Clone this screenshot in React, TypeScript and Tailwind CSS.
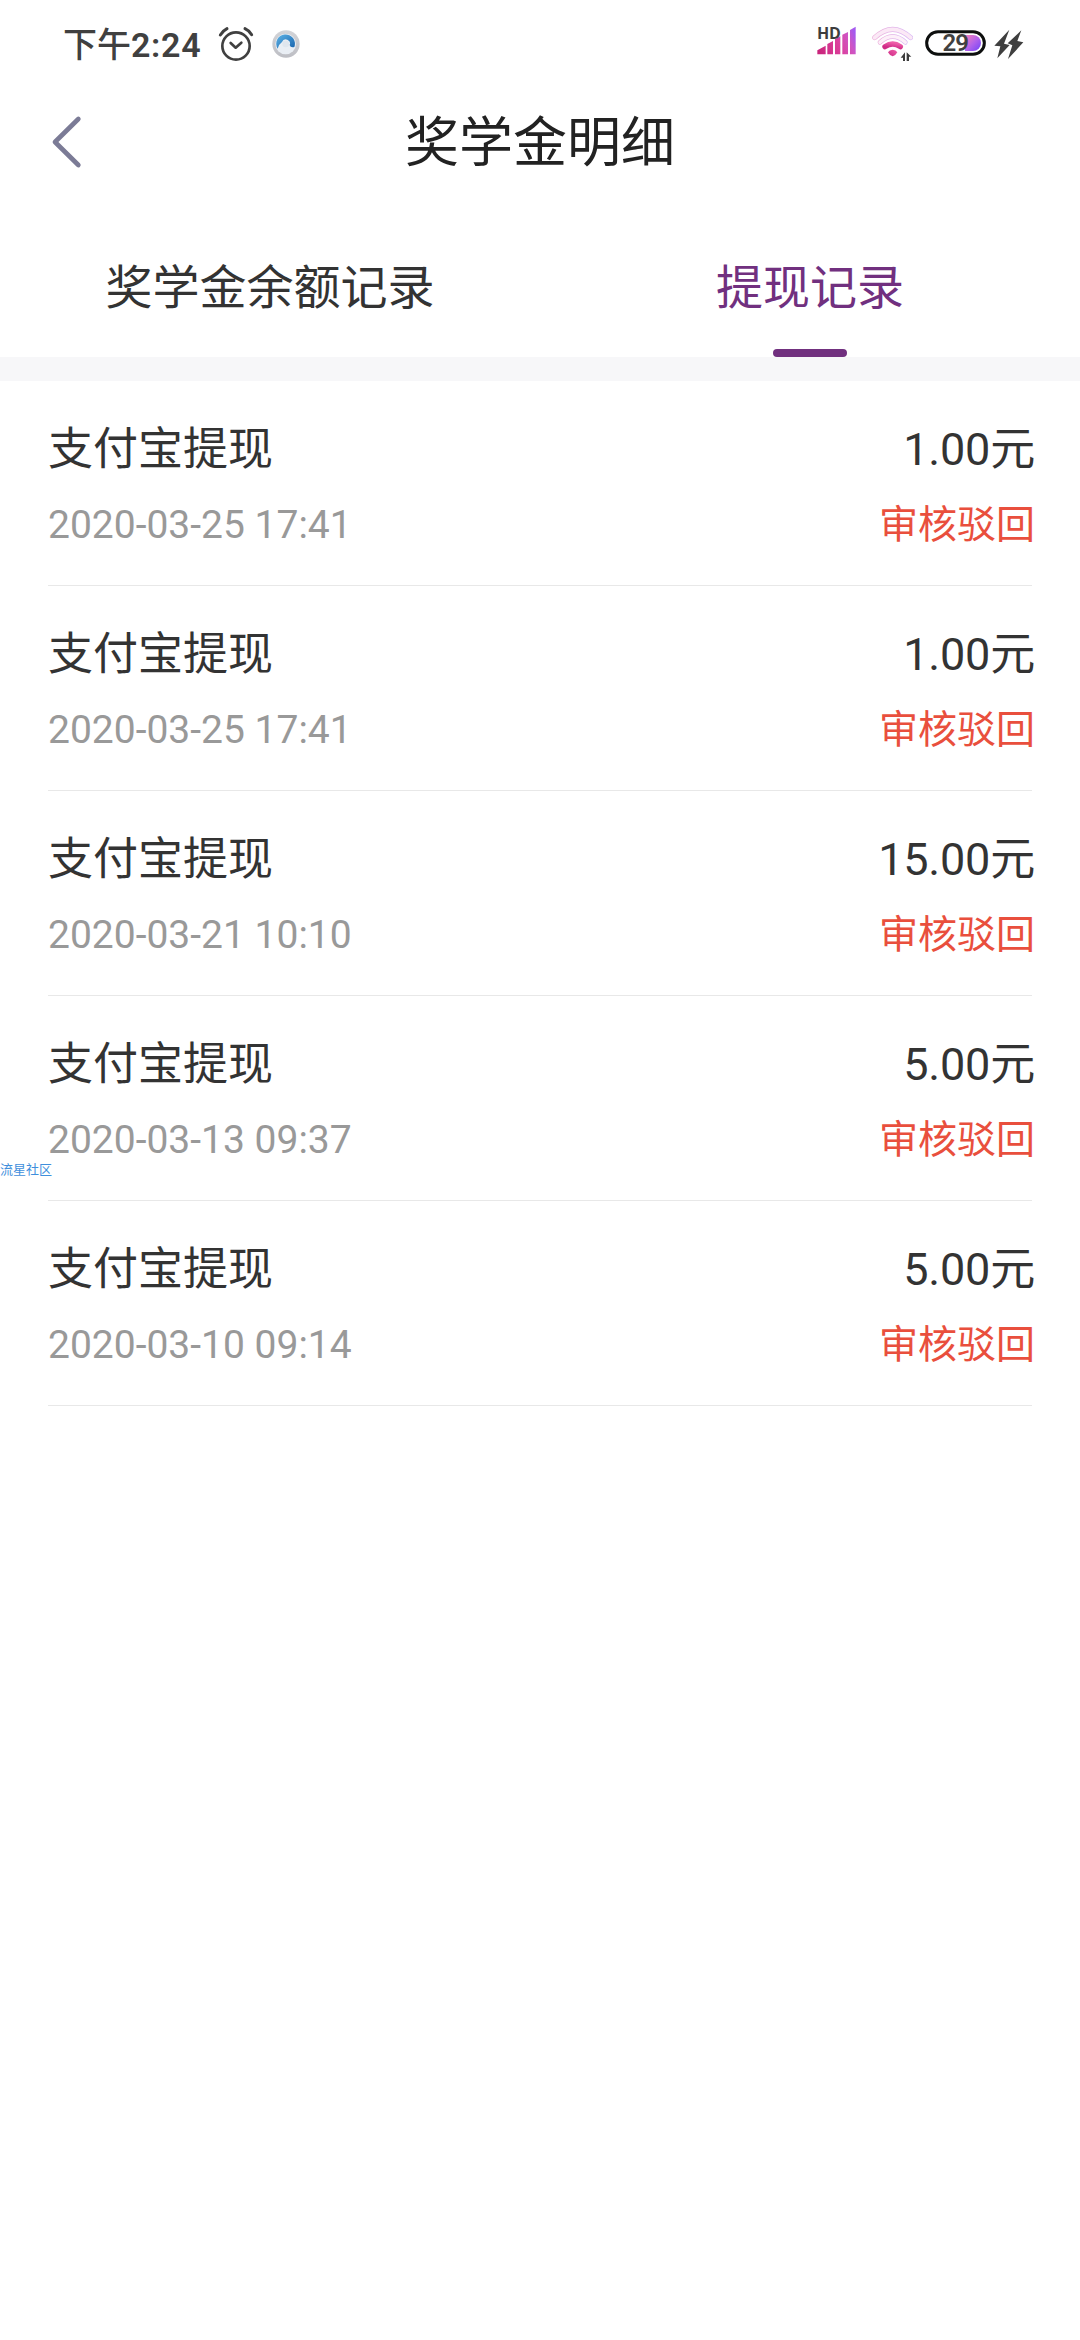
const font = 'font-[Roboto,"Noto_Sans_CJK_SC",sans-serif]';

const records = [
  { amount: "1.00元", time: "2020-03-25 17:41" },
  { amount: "1.00元", time: "2020-03-25 17:41" },
  { amount: "15.00元", time: "2020-03-21 10:10" },
  { amount: "5.00元", time: "2020-03-13 09:37" },
  { amount: "5.00元", time: "2020-03-10 09:14" },
];

function AlarmIcon() {
  return (
    <svg className="h-[36px] w-[36px]" viewBox="534 48 108 108" fill="none" stroke="#404040" strokeLinecap="round">
      <circle cx="588" cy="108" r="41" strokeWidth="8" />
      <path d="M572 99L587 113L604 98" strokeWidth="8" strokeLinejoin="round" />
      <path d="M541 75Q549 62 561 56M615 56Q628 62 635 74" strokeWidth="9" />
    </svg>
  );
}

function BrowserIcon() {
  return (
    <svg className="h-[28px] w-[28px]" viewBox="697 61 84 84">
      <defs>
        <linearGradient id="ring" x1="0" y1="0" x2="0" y2="1">
          <stop offset="0" stopColor="#d3d4d8" />
          <stop offset="1" stopColor="#bdbec4" />
        </linearGradient>
        <linearGradient id="swirl" x1="0" y1="0" x2="1" y2="1">
          <stop offset="0" stopColor="#5fb4e6" />
          <stop offset="1" stopColor="#1763ad" />
        </linearGradient>
      </defs>
      <circle cx="739" cy="103" r="41" fill="url(#ring)" />
      <circle cx="738" cy="103" r="31" fill="#e9eef4" />
      <path d="M714 117A28 28 0 1 1 764 112Q752 115 750 106A12 12 0 0 0 727 97Q718 103 714 117Z" fill="url(#swirl)" />
      <circle cx="738" cy="103" r="10" fill="#dfe6ee" />
    </svg>
  );
}

function SignalIcon() {
  return (
    <div className="relative h-[30px] w-[40px]">
      <svg className="h-[30px] w-[40px]" viewBox="50 46 120 90">
        <defs>
          <linearGradient id="sig" gradientUnits="userSpaceOnUse" x1="60" y1="134" x2="172" y2="90">
            <stop offset="0" stopColor="#c9257c" />
            <stop offset="0.5" stopColor="#dc3f9b" />
            <stop offset="0.8" stopColor="#cf55c4" />
            <stop offset="1" stopColor="#a35af0" />
          </linearGradient>
        </defs>
        <path
          fill="url(#sig)"
          d="M51 134V122L76 108V134ZM81 134V103L98 94V134ZM104 134V89L120 80V134ZM126 134V75L143 67V134ZM149 134V61L166 51V134Z"
        />
      </svg>
      <span className='absolute top-[1px] left-0 font-["Open_Sans",sans-serif] text-[16px] leading-[14px] font-bold tracking-[-0.3px] text-[#3d3d3d]'>
        HD
      </span>
    </div>
  );
}

function WifiIcon() {
  return (
    <svg className="h-[36px] w-[41px]" viewBox="216 48 123 108" fill="none">
      <defs>
        <linearGradient id="wf" x1="0" y1="1" x2="1" y2="0">
          <stop offset="0" stopColor="#cf2a86" />
          <stop offset="1" stopColor="#ee5fa9" />
        </linearGradient>
        <linearGradient id="wo" x1="0" y1="0" x2="1" y2="0">
          <stop offset="0" stopColor="#ecb3dc" />
          <stop offset="1" stopColor="#d9b9f5" />
        </linearGradient>
      </defs>
      <path d="M224 83Q278 33 332 83" stroke="url(#wo)" strokeWidth="15" strokeLinecap="round" />
      <path d="M224 83Q278 33 332 83" stroke="#fbe9f6" strokeWidth="11" strokeLinecap="round" />
      <path d="M240 97Q278 62 316 97" stroke="url(#wo)" strokeWidth="14" strokeLinecap="round" />
      <path d="M240 97Q278 62 316 97" stroke="#fdf0f9" strokeWidth="10" strokeLinecap="round" />
      <path d="M255 110Q278 94 301 110" stroke="url(#wf)" strokeWidth="16" strokeLinecap="round" />
      <path d="M264 127Q268 119 278 119Q288 119 292 127Q287 137 278 139Q269 137 264 127Z" fill="url(#wf)" />
      <path d="M315 127V153H309V143H302ZM320 153V127L334 140H327V153Z" fill="#3d3d3d" />
    </svg>
  );
}

function Battery() {
  return (
    <div className="relative h-[26px] w-[61px]">
      <svg className="h-[26px] w-[61px]" viewBox="375 58 183 78">
        <defs>
          <linearGradient id="bat" gradientUnits="userSpaceOnUse" x1="500" y1="78" x2="540" y2="116">
            <stop offset="0" stopColor="#ec7bc0" />
            <stop offset="0.5" stopColor="#b362ea" />
            <stop offset="1" stopColor="#7a48f5" />
          </linearGradient>
        </defs>
        <rect x="380" y="63" width="173" height="68" rx="34" fill="#fff" stroke="#0d0f0e" strokeWidth="9" />
        <path d="M495 73H519A24 24 0 0 1 519 121H495Z" fill="url(#bat)" />
      </svg>
      <span className="absolute top-0 left-[17.5px] font-[Roboto,sans-serif] text-[24px] leading-[27px] font-semibold tracking-[-0.9px] text-[#404040]">
        29
      </span>
    </div>
  );
}

function BoltIcon() {
  return (
    <svg className="h-[30px] w-[30px]" viewBox="581 56 90 90" fill="#3f3f3f">
      <path d="M627 58L582 106L600 108L591 144L628 104L611 100Z" />
      <path d="M663 60L622 99L636 105L623 146L669 96L651 92Z" />
    </svg>
  );
}

function StatusBar() {
  return (
    <div className="flex h-[88px] items-start justify-between pr-[56px] pl-[63px]">
      <div className="flex">
        <div className="mt-[25px] flex w-[138px] text-[34px] leading-[40px] font-medium whitespace-nowrap text-[#404040]">
          <span>下午</span>
          <span className="font-semibold tracking-[0.7px]">2:24</span>
        </div>
        <div className="mt-[26px] ml-[17px]">
          <AlarmIcon />
        </div>
        <div className="mt-[30px] ml-[18px]">
          <BrowserIcon />
        </div>
      </div>
      <div className="flex">
        <div className="mt-[25px]">
          <SignalIcon />
        </div>
        <div className="mt-[26px] ml-[15px]">
          <WifiIcon />
        </div>
        <div className="mt-[30px] ml-[12px]">
          <Battery />
        </div>
        <div className="mt-[29px] ml-[8px]">
          <BoltIcon />
        </div>
      </div>
    </div>
  );
}

export default function App() {
  return (
    <div className={`${font} relative h-[2340px] w-[1080px] overflow-hidden bg-white text-[#333333]`}>
      <StatusBar />

      <header className="grid h-[111px] grid-cols-[80px_1fr_80px] items-center">
        <svg
          className="mb-[4px] ml-[50px] h-[54px] w-[34px]"
          viewBox="60 73 102 162"
          fill="none"
          stroke="#7b7b96"
          strokeWidth="14"
          strokeLinecap="round"
          strokeLinejoin="round"
        >
          <path d="M145 85L75 154L145 223" />
        </svg>
        <h1 className="text-center text-[54px] leading-[72px] text-[#222222]">奖学金明细</h1>
      </header>

      <nav className="grid h-[158px] grid-cols-2 text-center text-[47px] leading-[60px]">
        <button className="flex flex-col items-center pt-[59px]">奖学金余额记录</button>
        <button className="flex flex-col items-center justify-between pt-[59px] text-[#71307f]">
          提现记录
          <span className="h-[8px] w-[74px] rounded-full bg-[#71307f]" />
        </button>
      </nav>

      <div className="h-[24px] bg-[#f7f7f9]" />

      <ul className="mx-[48px]">
        {records.map((r, i) => (
          <li key={i} className="h-[205px] border-b border-[#e8e8e8] pt-[39px]">
            <div className="-mr-[3px] flex justify-between text-[45px] leading-[60px]">
              <span>支付宝提现</span>
              <span className="tracking-[-0.2px]">{r.amount}</span>
            </div>
            <div className="mt-[20px] -mr-[3px] flex justify-between text-[39px] leading-[50px]">
              <span className="text-[#999999]">{r.time}</span>
              <span className="text-[#e94f3d]">审核驳回</span>
            </div>
          </li>
        ))}
      </ul>

      <span className="absolute top-[1160px] left-0 text-[13px] leading-[20px] text-[#3f8fdc]">流星社区</span>
    </div>
  );
}
